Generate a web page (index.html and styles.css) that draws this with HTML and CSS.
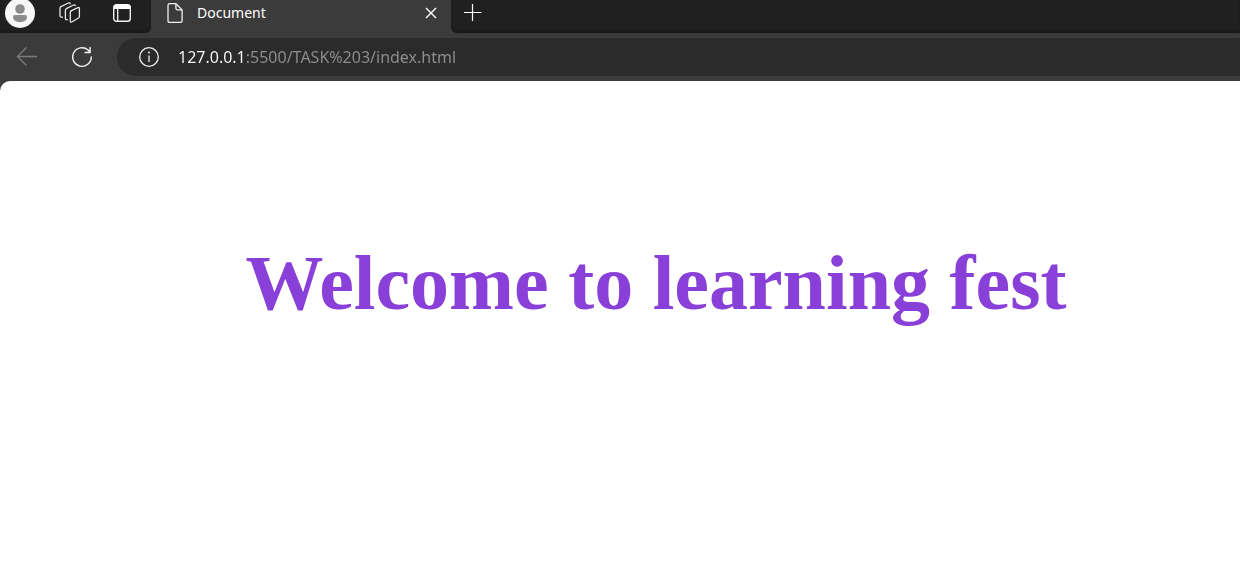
FILE: index.html
```html
<!DOCTYPE html>
<html lang="en">
<head>
<meta charset="utf-8">
<title>Document</title>
<link rel="stylesheet" href="styles.css">
</head>
<body>
<header class="browser">
  <div class="tab-strip">
    <div class="strip-tools">
      <button class="icon-btn" aria-label="Profile">
        <svg width="30" height="30" viewBox="0 0 30 30"><circle cx="15" cy="15" r="15" fill="#f7f7f7"/><circle cx="15" cy="11" r="4.8" fill="#8b8b8b"/><path d="M10 17h10a2 2 0 0 1 2 2c0 3-3 5-7 5s-7-2-7-5a2 2 0 0 1 2-2z" fill="#8b8b8b"/></svg>
      </button>
      <button class="icon-btn" aria-label="Workspaces">
        <svg width="22" height="22" viewBox="0 0 22 22" fill="none" stroke="#e6e6e6" stroke-width="1.3" stroke-linejoin="round" stroke-linecap="round"><path d="M11.500 9.200 19 5.600q1.400-.6 1.400.8v8.200q0 1-.9 1.400l-6.800 4q-1.400.7-1.400-.9v-8.500q0-.9.8-1.400z"/><path d="M8.400 17.600q-2 .5-2-1V8.200q0-1 .9-1.500L14.600 3q1.300-.6 1.700.7"/><path d="M3.500 15.100Q1 15.500 1 13.800V6.200q0-1.100 1-1.600L9.400 1q1.400-.5 1.800.7"/></svg>
      </button>
      <button class="icon-btn tab-actions" aria-label="Tab actions menu">
        <svg width="20" height="20" viewBox="0 0 20 20"><rect x="1.7" y="1.7" width="16.6" height="16.6" rx="2.8" fill="none" stroke="#f2f2f2" stroke-width="1.4"/><path d="M1.500 6V4.500q0-3 3-3h11q3 0 3 3V6z" fill="#fff"/><path d="M5.700 6v12" stroke="#f2f2f2" stroke-width="1.3"/></svg>
      </button>
    </div>
    <div class="tab">
      <svg width="16" height="22" viewBox="0 0 16 22" fill="none" stroke="#f2f2f2" stroke-width="1.3" stroke-linejoin="round"><path d="M2.700 1.700h6.200l6.200 6.200v10.900q0 1.600-1.600 1.600H2.600Q1 20.400 1 18.800V3.300q0-1.600 1.700-1.600z"/><path d="M8.900 1.700v4.600q0 1.600 1.600 1.600h4.600"/></svg>
      <span class="tab-title">Document</span>
      <button class="icon-btn" aria-label="Close tab">
        <svg width="12" height="12" viewBox="0 0 12 12" stroke="#fff" stroke-width="1.4"><path d="m1 1 10 10M11 1 1 11"/></svg>
      </button>
    </div>
    <div class="strip-rest">
      <button class="icon-btn" aria-label="New tab">
        <svg width="18" height="18" viewBox="0 0 18 18" stroke="#fff" stroke-width="1.2"><path d="M0 8.500h17.500M8.500 0v17"/></svg>
      </button>
    </div>
  </div>
  <nav class="toolbar">
    <button class="icon-btn" aria-label="Back">
      <svg width="22" height="20" viewBox="0 0 22 20" fill="none" stroke="#7d7d7d" stroke-width="1.3"><path d="M1.500 9.500H21M10.500.5l-9 9 9 9"/></svg>
    </button>
    <button class="icon-btn" aria-label="Refresh">
      <svg width="22" height="22" viewBox="0 0 22 22" fill="none" stroke="#f5f5f5" stroke-width="1.4" stroke-linecap="round" stroke-linejoin="round"><path d="M20.300 11a9.300 9.300 0 1 1-3.200-7l2 2.200M19.100 1.500v5h-5"/></svg>
    </button>
    <div class="address">
      <button class="icon-btn" aria-label="View site information">
        <svg width="22" height="22" viewBox="0 0 22 22"><circle cx="11" cy="11" r="9.300" fill="none" stroke="#f0f0f0" stroke-width="1.3"/><path d="M11 9.500V16" stroke="#f0f0f0" stroke-width="1.3"/><circle cx="11" cy="6.500" r="1" fill="#f0f0f0"/></svg>
      </button>
      <input class="url" type="text" aria-label="Address" value="127.0.0.1:5500/TASK%203/index.html" spellcheck="false">
    </div>
  </nav>
</header>
<main class="page">
  <h1 class="welcome">Welcome to learning fest</h1>
</main>
</body>
</html>
```

FILE: styles.css
```css
* {
  box-sizing: border-box;
}

body {
  margin: 0;
  min-height: 100vh;
  display: flex;
  flex-direction: column;
  background: #3b3b3b;
  font-family: "Segoe UI", "Noto Sans", sans-serif;
}

.icon-btn {
  display: flex;
  padding: 0;
  border: 0;
  background: none;
}

.icon-btn svg {
  display: block;
}

.tab-strip {
  display: flex;
  height: 33px;
}

.strip-tools,
.strip-rest {
  display: flex;
  background: #202020;
  box-shadow: inset 0 -2px 2px #191919;
}

.strip-tools {
  width: 151px;
  padding: 0 19px 7px 5px;
  align-items: center;
  gap: 24px;
  border-bottom-right-radius: 6px;
}

.tab-actions {
  margin-left: auto;
}

.strip-rest {
  flex: 1;
  padding: 4px 13px;
  align-items: flex-start;
  border-bottom-left-radius: 6px;
}

.tab {
  display: flex;
  align-items: center;
  width: 300px;
  padding: 0 14px 7px 16px;
}

.tab-title {
  flex: 1;
  padding-left: 14px;
  color: #fff;
  font-size: 14px;
  line-height: 20px;
}

.toolbar {
  display: flex;
  align-items: center;
  gap: 33px;
  height: 48px;
  padding-left: 16px;
}

.address {
  display: flex;
  flex: 1;
  align-items: center;
  gap: 18px;
  height: 38px;
  margin-left: -9px;
  padding-left: 21px;
  border-radius: 19px 0 0 19px;
  background: #2b2b2b;
}

.url {
  flex: 1;
  min-width: 0;
  padding: 0;
  border: 0;
  outline: 0;
  background: linear-gradient(to right, #fff 68px, #8f8f8f 68px);
  -webkit-background-clip: text;
  background-clip: text;
  color: transparent;
  caret-color: #fff;
  font-family: inherit;
  font-size: 16px;
  line-height: 24px;
}

.page {
  flex: 1;
  padding: 158px 16px 16px 88px;
  border-top-left-radius: 10px;
  background: #fff;
}

.welcome {
  margin: 0;
  color: #8940d8;
  font-family: "Times New Roman", "Liberation Serif", serif;
  font-size: 78px;
  line-height: 88px;
  text-align: center;
}
```
